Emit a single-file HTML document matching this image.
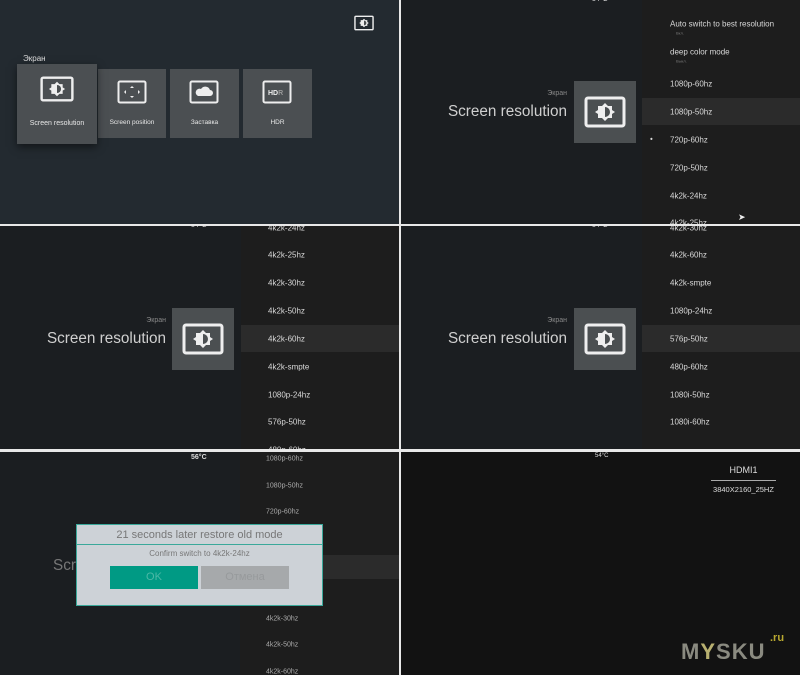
<!DOCTYPE html>
<html><head><meta charset="utf-8"><style>
*{margin:0;padding:0;box-sizing:border-box}
body{width:800px;height:675px;background:#e8e8e8;position:relative;overflow:hidden;font-family:"Liberation Sans","DejaVu Sans",sans-serif;color:#ddd}
.p{position:absolute;overflow:hidden}
.a{position:absolute;white-space:nowrap}
.list{position:absolute;top:0;bottom:0;background:#1d1d1d}
.it{position:absolute;font-size:8px;color:#d8d8d8;transform:translateY(-50%)}
.hl{position:absolute;background:#2b2b2b}
.box{position:absolute;background:#4b4f51;width:62px;height:62px}
.card{position:absolute;background:#4b4f52}
.lbl{position:absolute;left:0;right:0;text-align:center;font-size:7px;color:#e8e8e8}
.st{position:absolute;white-space:nowrap;font-size:15.3px;color:#cfcfcf}
</style></head><body>
<svg width="0" height="0" style="position:absolute"><defs>
<symbol id="ic" viewBox="0 0 42 32"><rect x="2" y="2" width="38" height="28" rx="2" fill="none" stroke="#eee" stroke-width="3"/><polygon points="21,7 24,10 28,10 28,14 31,16 28,18 28,22 24,22 21,25 18,22 14,22 14,18 11,16 14,14 14,10 18,10" fill="#eee"/><path d="M21 11 A5 5 0 0 1 21 21Z" fill="#4b4f51"/></symbol>
</defs></svg>

<!-- Panel 1 -->
<div class="p" style="left:0;top:0;width:399px;height:224px;background:#232a30">
<svg class="a" style="left:354px;top:15px" width="20" height="16"><use href="#ic"/></svg>
<div class="a" style="left:23px;top:54px;font-size:8px;color:#ddd">Экран</div>
<div class="card" style="left:98px;top:69px;width:68px;height:69px"><svg class="a" style="left:19px;top:11px" width="30" height="24" viewBox="0 0 30 24"><rect x="1.5" y="1.5" width="27" height="21" rx="1.5" fill="none" stroke="#eee" stroke-width="2"/><path d="M15 6l2 2h-4zM15 18l2-2h-4zM7 12l2-2v4zM23 12l-2-2v4z" fill="#eee"/></svg><div class="lbl" style="top:50px;font-size:6.5px">Screen position</div></div>
<div class="card" style="left:170px;top:69px;width:69px;height:69px"><svg class="a" style="left:19px;top:11px" width="30" height="24" viewBox="0 0 30 24"><rect x="1.5" y="1.5" width="27" height="21" rx="1.5" fill="none" stroke="#eee" stroke-width="2"/><path d="M9 16h12a3 3 0 0 0 0-6a5 5 0 0 0-9-1a3.5 3.5 0 0 0-3 7z" fill="#eee"/></svg><div class="lbl" style="top:50px;font-size:6.5px">Заставка</div></div>
<div class="card" style="left:243px;top:69px;width:69px;height:69px"><svg class="a" style="left:19px;top:11px" width="30" height="24" viewBox="0 0 30 24"><rect x="1.5" y="1.5" width="27" height="21" rx="1.5" fill="none" stroke="#eee" stroke-width="2"/><text x="6" y="15" font-size="7" font-weight="bold" fill="#eee" font-family="Liberation Sans">HD<tspan fill="#999">R</tspan></text></svg><div class="lbl" style="top:50px;font-size:6.5px">HDR</div></div>
<div class="card" style="left:17px;top:64px;width:80px;height:80px;box-shadow:0 3px 8px rgba(0,0,0,.5)"><svg class="a" style="left:23px;top:12px" width="34" height="26"><use href="#ic"/></svg><div class="lbl" style="top:56px">Screen resolution</div></div>
</div>

<!-- Panel 2 -->
<div class="p" style="left:401px;top:0;width:399px;height:224px;background:#1b1e21">
<div class="a" style="left:191px;top:-4px;font-size:7px">54°C</div>
<div class="a" style="right:233px;top:90px;font-size:7px;color:#888">Экран</div>
<div class="st" style="right:233px;top:103px">Screen resolution</div>
<div class="box" style="left:173px;top:81px"><svg class="a" style="left:10px;top:15px" width="42" height="32"><use href="#ic"/></svg></div>
<div class="list" style="left:241px;width:158px">
<div class="hl" style="left:0;right:0;top:98px;height:27px"></div>
<div class="it" style="left:28px;top:24px">Auto switch to best resolution</div>
<div class="it" style="left:34px;top:33px;font-size:4px;color:#777">Вкл.</div>
<div class="it" style="left:28px;top:52px">deep color mode</div>
<div class="it" style="left:34px;top:61px;font-size:4px;color:#777">Выкл.</div>
<div class="it" style="left:28px;top:84px">1080p-60hz</div>
<div class="it" style="left:28px;top:112px">1080p-50hz</div>
<div class="it" style="left:8px;top:139px">•</div>
<div class="it" style="left:28px;top:140px">720p-60hz</div>
<div class="it" style="left:28px;top:168px">720p-50hz</div>
<div class="it" style="left:28px;top:196px">4k2k-24hz</div>
<div class="it" style="left:28px;top:223px">4k2k-25hz</div>
<div class="a" style="left:96px;top:212px;font-size:9px;color:#eee">➤</div>
</div></div>

<!-- Panel 3 -->
<div class="p" style="left:0;top:226px;width:399px;height:223px;background:#1b1e21">
<div class="a" style="left:191px;top:-4px;font-size:7px">54°C</div>
<div class="a" style="right:233px;top:91px;font-size:7px;color:#888">Экран</div>
<div class="st" style="right:233px;top:104px">Screen resolution</div>
<div class="box" style="left:172px;top:82px"><svg class="a" style="left:10px;top:15px" width="42" height="32"><use href="#ic"/></svg></div>
<div class="list" style="left:241px;width:158px">
<div class="hl" style="left:0;right:0;top:99px;height:27px"></div>
<div class="it" style="left:27px;top:2px">4k2k-24hz</div>
<div class="it" style="left:27px;top:29px">4k2k-25hz</div>
<div class="it" style="left:27px;top:57px">4k2k-30hz</div>
<div class="it" style="left:27px;top:85px">4k2k-50hz</div>
<div class="it" style="left:27px;top:113px">4k2k-60hz</div>
<div class="it" style="left:27px;top:141px">4k2k-smpte</div>
<div class="it" style="left:27px;top:169px">1080p-24hz</div>
<div class="it" style="left:27px;top:196px">576p-50hz</div>
<div class="it" style="left:27px;top:224px">480p-60hz</div>
</div></div>

<!-- Panel 4 -->
<div class="p" style="left:401px;top:226px;width:399px;height:223px;background:#1b1e21">
<div class="a" style="left:191px;top:-4px;font-size:7px">54°C</div>
<div class="a" style="right:233px;top:91px;font-size:7px;color:#888">Экран</div>
<div class="st" style="right:233px;top:104px">Screen resolution</div>
<div class="box" style="left:173px;top:82px"><svg class="a" style="left:10px;top:15px" width="42" height="32"><use href="#ic"/></svg></div>
<div class="list" style="left:241px;width:158px">
<div class="hl" style="left:0;right:0;top:99px;height:27px"></div>
<div class="it" style="left:28px;top:2px">4k2k-30hz</div>
<div class="it" style="left:28px;top:29px">4k2k-60hz</div>
<div class="it" style="left:28px;top:57px">4k2k-smpte</div>
<div class="it" style="left:28px;top:85px">1080p-24hz</div>
<div class="it" style="left:28px;top:113px">576p-50hz</div>
<div class="it" style="left:28px;top:141px">480p-60hz</div>
<div class="it" style="left:28px;top:169px">1080i-50hz</div>
<div class="it" style="left:28px;top:196px">1080i-60hz</div>
</div></div>

<!-- Panel 5 -->
<div class="p" style="left:0;top:452px;width:399px;height:223px;background:#1b1e21">
<div class="a" style="left:191px;top:2px;font-size:7px;font-weight:bold">56°C</div>
<div class="a" style="left:53px;top:105px;font-size:15.3px;color:#777">Screen resolution</div>
<div class="list" style="left:240px;width:159px">
<div class="hl" style="left:0;right:0;top:103px;height:24px"></div>
<div class="it" style="left:26px;top:7px;font-size:7px;color:#aaa">1080p-60hz</div>
<div class="it" style="left:26px;top:34px;font-size:7px;color:#aaa">1080p-50hz</div>
<div class="it" style="left:26px;top:60px;font-size:7px;color:#aaa">720p-60hz</div>
<div class="it" style="left:26px;top:167px;font-size:7px;color:#aaa">4k2k-30hz</div>
<div class="it" style="left:26px;top:193px;font-size:7px;color:#aaa">4k2k-50hz</div>
<div class="it" style="left:26px;top:220px;font-size:7px;color:#aaa">4k2k-60hz</div>
</div>
<div class="a" style="left:76px;top:72px;width:247px;height:82px;background:#cdd2d7;border:1px solid #3aa89a">
<div class="lbl" style="top:4px;font-size:11px;color:#777">21 seconds later restore old mode</div>
<div class="a" style="left:0;right:0;top:19px;height:1px;background:#3aa89a"></div>
<div class="lbl" style="top:24px;font-size:8px;color:#777">Confirm switch to 4k2k-24hz</div>
<div class="a" style="left:33px;top:41px;width:88px;height:23px;background:#009a84;color:#4cb8a6;font-size:11px;text-align:center;line-height:23px">OK</div>
<div class="a" style="left:124px;top:41px;width:88px;height:23px;background:#a6a9ab;color:#979a9c;font-size:11px;text-align:center;line-height:23px">Отмена</div>
</div>
</div>

<!-- Panel 6 -->
<div class="p" style="left:401px;top:452px;width:399px;height:223px;background:#121212">
<div class="a" style="left:194px;top:1px;font-size:6px">54°C</div>
<div class="a" style="left:310px;top:13px;width:65px;text-align:center;font-size:9px;color:#ddd">HDMI1</div>
<div class="a" style="left:310px;top:28px;width:65px;height:1px;background:#aaa"></div>
<div class="a" style="left:306px;top:33px;width:73px;text-align:center;font-size:7.5px;color:#ddd">3840X2160_25HZ</div>
<div class="a" style="left:280px;top:187px;font-size:22px;font-weight:bold;letter-spacing:1px;color:#8a8a80">M<span style="color:#b8b070">Y</span>SKU</div>
<div class="a" style="left:369px;top:180px;font-size:11px;font-weight:bold;color:#b8a830">.ru</div>
</div>
</body></html>
